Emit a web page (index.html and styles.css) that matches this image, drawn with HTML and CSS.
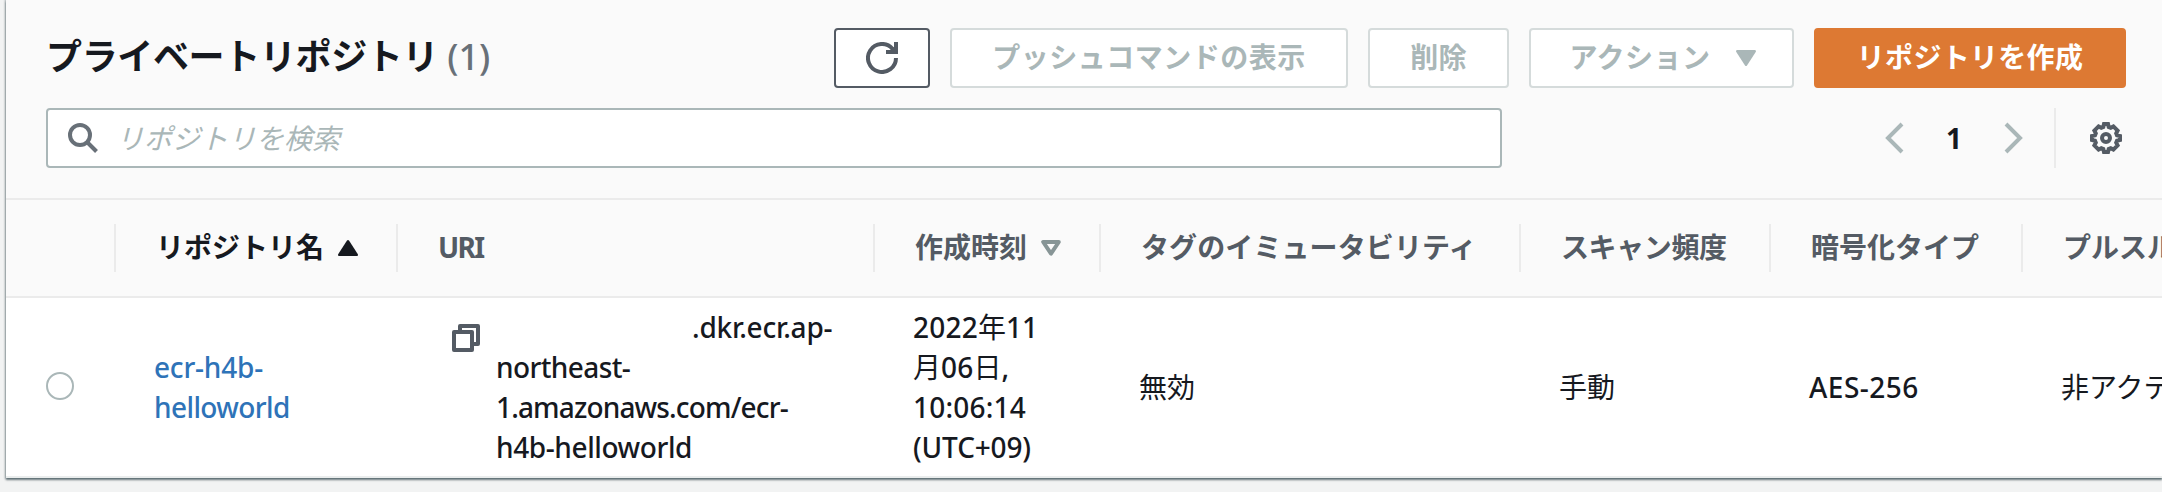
FILE: index.html
```html
<!DOCTYPE html>
<html lang="ja">
<head>
<meta charset="utf-8">
<title>プライベートリポジトリ</title>
<link rel="stylesheet" href="styles.css">
</head>
<body>
<main class="panel">
  <header class="panel-header">
    <div class="title-row">
      <h1 class="title">プライベートリポジトリ <span class="count">(1)</span></h1>
      <div class="actions">
        <button class="btn btn-refresh" aria-label="更新">
          <svg width="32" height="32" viewBox="0 0 32 32" fill="none" stroke="currentColor" stroke-width="4"><path d="M30 16a14 14 0 1 1-3.500-9.300L29 10"/><path d="M32 0v12H20V8h4l4-3V0z" fill="currentColor" stroke="none"/></svg>
        </button>
        <button class="btn btn-push" disabled>プッシュコマンドの表示</button>
        <button class="btn btn-delete" disabled>削除</button>
        <button class="btn btn-menu" disabled>アクション
          <svg width="20" height="16" viewBox="0 0 20 16" fill="currentColor"><path d="M1 0h18q1.500.6.700 2L11 15.500q-1 1-2 0L.3 2Q-.5.600 1 0z"/></svg>
        </button>
        <button class="btn btn-create">リポジトリを作成</button>
      </div>
    </div>
    <div class="filter-row">
      <div class="search">
        <svg width="30" height="30" viewBox="0 0 30 30" fill="none" stroke="#687078" stroke-width="4"><circle cx="12" cy="12" r="10"/><path d="M19 19l9.500 9.500"/></svg>
        <span class="placeholder">リポジトリを検索</span>
      </div>
      <div class="pager">
        <svg class="prev" width="19" height="32" viewBox="0 0 19 32" fill="none" stroke="#aab7b8" stroke-width="4"><path d="M17 2L3 16l14 14"/></svg>
        <span class="page">1</span>
        <svg class="next" width="19" height="32" viewBox="0 0 19 32" fill="none" stroke="#aab7b8" stroke-width="4"><path d="M2 2l14 14L2 30"/></svg>
        <span class="split"></span>
        <svg class="gear" width="32" height="32" viewBox="0 0 32 32" fill="none" stroke="#545b64" stroke-width="4"><path d="M14 2L18 2 18.700 5 20.700 5.800 23.400 4.400 27.600 8.600 26.200 11.300 27 13.300 30 14 30 18 27 18.700 26.200 20.700 27.600 23.400 23.400 27.600 20.700 26.200 18.700 27 18 30 14 30 13.300 27 11.300 26.200 8.600 27.600 4.400 23.400 5.800 20.700 5 18.700 2 18 2 14 5 13.300 5.800 11.300 4.400 8.600 8.600 4.400 11.300 5.800 13.300 5z"/><circle cx="16" cy="16" r="4"/></svg>
      </div>
    </div>
  </header>
  <div class="row head">
    <div class="cell"></div>
    <div class="cell sorted">リポジトリ名
      <svg width="20" height="16" viewBox="0 0 20 16" fill="currentColor"><path d="M1 16h18q1.500-.6.700-2L11 .5q-1-1-2 0L.3 14q-.8 1.400.7 2z"/></svg>
    </div>
    <div class="cell tight">URI</div>
    <div class="cell">作成時刻
      <svg width="20" height="16" viewBox="0 0 20 16" fill="none" stroke="#879596" stroke-width="4" stroke-linejoin="round"><path d="M2.200 2h15.600L10 13.600z"/></svg>
    </div>
    <div class="cell tag">タグのイミュータビリティ</div>
    <div class="cell scan">スキャン頻度</div>
    <div class="cell">暗号化タイプ</div>
    <div class="cell">プルスルーキャッシュ</div>
  </div>
  <div class="row data">
    <div class="cell pick"><span class="radio"></span></div>
    <div class="cell"><a class="link latin"><span class="prefix">ecr-h4b-</span><br>helloworld</a></div>
    <div class="cell uri">
      <svg width="28" height="28" viewBox="0 0 28 28" fill="none" stroke="#545b64" stroke-width="4" stroke-linejoin="round"><path d="M2 8h18v18H2z"/><path d="M8 6V2h18v18h-4"/></svg>
      <div class="uri-text latin"><span class="host">.dkr.ecr.ap-</span><br>northeast-<br><span class="domain">1.amazonaws.com/ecr-</span><br><span class="repo">h4b-helloworld</span></div>
    </div>
    <div class="cell"><div class="date"><b>2022</b>年<b>11</b><br>月<b>06</b>日<b>,</b><br><b>10:06:14</b><br><b class="zone">(UTC+09)</b></div></div>
    <div class="cell">無効</div>
    <div class="cell">手動</div>
    <div class="cell"><span class="cipher">AES-256</span></div>
    <div class="cell">非アクティブ</div>
  </div>
</main>
</body>
</html>
```
FILE: styles.css
```css
* { box-sizing: border-box; }
body {
  margin: 0;
  height: 492px;
  overflow: hidden;
  background: #f2f3f3;
  color: #16191f;
  font: 28px/40px "Noto Sans", "Noto Sans CJK JP", sans-serif;
}
svg { display: block; flex: none; }
.panel {
  height: 478px;
  margin-left: 6px;
  background: #fff;
  box-shadow: 0 2px 2px rgba(0, 28, 36, .5), 0 0 2px 1px rgba(0, 28, 36, .3);
}
.panel-header {
  height: 200px;
  padding: 28px 0 0 40px;
  background: #fafafa;
  border-bottom: 2px solid #ebebeb;
}
.title-row, .filter-row {
  display: flex;
  justify-content: space-between;
  width: 2080px;
  height: 60px;
}
.filter-row { margin-top: 20px; }
.title {
  margin: 0;
  font-size: 36px;
  line-height: 58px;
  font-weight: 700;
  letter-spacing: -.35px;
  white-space: nowrap;
}
.count { font-weight: 500; letter-spacing: 0; color: #687078; }
.actions { display: flex; gap: 20px; }
.btn {
  display: flex;
  align-items: center;
  justify-content: center;
  height: 60px;
  padding: 0 0 2px;
  border: 2px solid #d5dbdb;
  border-radius: 4px;
  background: #fff;
  color: #aab7b8;
  font: inherit;
  font-weight: 700;
  letter-spacing: .3px;
  white-space: nowrap;
}
.btn-refresh { width: 96px; padding: 0; border-color: #545b64; color: #545b64; }
.btn-push { width: 398px; letter-spacing: .5px; }
.btn-delete { width: 141px; }
.btn-menu { width: 265px; gap: 25px; padding-left: 2px; letter-spacing: .5px; }
.btn-menu svg { margin-top: 2px; }
.btn-create { width: 312px; background: #dd7933; border-color: #dd7933; color: #fff; }
.search {
  display: flex;
  align-items: center;
  gap: 18px;
  width: 1456px;
  padding-left: 20px;
  border: 2px solid #aab7b8;
  border-radius: 4px;
  background: #fff;
}
.placeholder { color: #aab7b8; font-style: italic; }
.pager { display: flex; align-items: center; padding-right: 4px; }
.page { width: 100px; text-align: center; font-weight: 700; }
.split { width: 2px; height: 60px; margin: 0 34px 0 31px; background: #ebebeb; }
.row {
  display: grid;
  grid-template-columns: 108px 282px 477px 226px 420px 250px 252px 141px;
  overflow: hidden;
}
.cell { display: flex; align-items: center; min-width: 0; white-space: nowrap; }
.head {
  height: 98px;
  padding: 24px 0;
  background: #fafafa;
  border-bottom: 2px solid #ebebeb;
  color: #545b64;
  font-weight: 700;
}
.head .cell { gap: 14px; height: 48px; padding: 0 0 2px 40px; }
.head .cell + .cell { border-left: 2px solid #ebebeb; }
.head svg { margin-top: 2px; }
.head .sorted { color: #16191f; }
.head .tight { letter-spacing: -1.6px; }
.head .tag { letter-spacing: .1px; }
.head .scan { letter-spacing: -.4px; }
.data { height: 180px; border-bottom: 2px solid #eaeded; }
.data .cell { padding-left: 40px; }
.radio {
  width: 28px;
  height: 28px;
  margin-bottom: 2px;
  border: 2px solid #aab7b8;
  border-radius: 50%;
}
.latin { font-weight: 500; letter-spacing: -.6px; }
.link { color: #2e73b8; }
.link .prefix { letter-spacing: -.2px; }
.uri svg { align-self: flex-start; margin: 26px 0 0 16px; }
.uri-text { margin-left: 16px; }
.host { padding-left: 196px; letter-spacing: -.2px; }
.domain { letter-spacing: -.85px; }
.repo { letter-spacing: -.4px; }
.date b { font-weight: 500; }
.date b:not(.zone) { letter-spacing: .2px; }
.date .zone { letter-spacing: -.15px; }
.cipher { font-weight: 500; letter-spacing: .5px; }
```
